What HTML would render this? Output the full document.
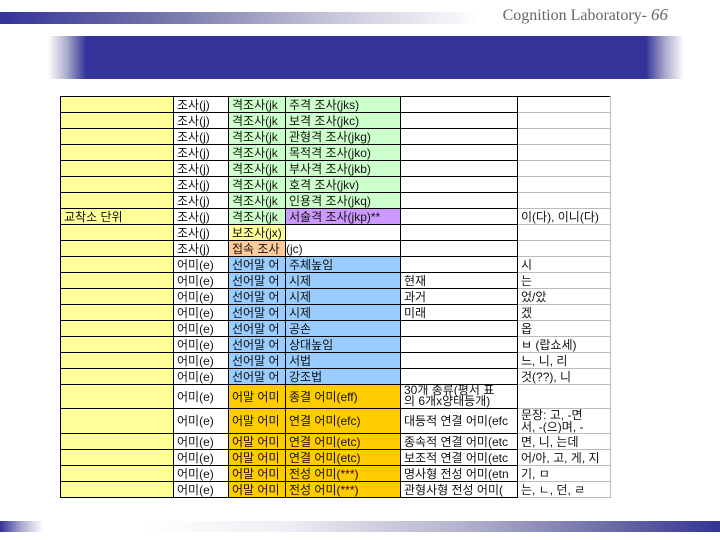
<!DOCTYPE html>
<html><head><meta charset="utf-8"><style>
*{margin:0;padding:0;box-sizing:border-box}
body{width:720px;height:540px;background:#fff;position:relative;overflow:hidden;font-family:"Liberation Sans","Noto Sans CJK KR","NanumGothic",sans-serif}
.topbar{position:absolute;left:0;top:12px;width:480px;height:12px;background:linear-gradient(90deg,#333399 0%,#7777aa 35%,#c8c8dc 70%,#fff 100%)}
.hdr{position:absolute;right:52px;top:5px;font-family:"Liberation Serif",serif;font-size:16px;color:#666}
.hdr i{font-size:17px}
.title{position:absolute;left:48px;top:36px;width:636px;height:43px;background:linear-gradient(90deg,#fff 0%,#aaaacc 3%,#333399 6%,#333399 94%,#aaaacc 97%,#fff 100%)}
.botbar{position:absolute;left:0;top:521px;width:720px;height:11px;background:linear-gradient(90deg,#333399 0%,#aaaad0 3%,#fff 6%,#fff 20%,#eeeef4 40%,#b0b0cc 65%,#6a6aa8 85%,#333399 100%)}
table{position:absolute;left:60px;top:96px;width:550px;border-collapse:collapse;table-layout:fixed;font-size:12px}
td{border:1px solid #000;height:16px;padding:0 0 0 3px;white-space:nowrap;overflow:hidden;line-height:14px;color:#111}
td.c6{border-color:#bbb;border-left:1px solid #000}
tr:first-child td.c6{border-top:1px solid #000}
.y{background:#ffff99}.g{background:#ccffcc}.p{background:#cc99ff}.o{background:#ffcc99}.b{background:#99ccff}.gd{background:#ffcc00}
tr.t td{height:24px}
</style></head><body>
<div class="topbar"></div>
<div class="hdr">Cognition Laboratory- <i>66</i></div>
<div class="title"></div>
<table>
<colgroup><col style="width:113px"><col style="width:55px"><col style="width:57px"><col style="width:115px"><col style="width:117px"><col style="width:93px"></colgroup>
<tr><td class="y"></td><td>조사(j)</td><td class="g">격조사(jk</td><td class="g">주격 조사(jks)</td><td></td><td class="c6"></td></tr>
<tr><td class="y"></td><td>조사(j)</td><td class="g">격조사(jk</td><td class="g">보격 조사(jkc)</td><td></td><td class="c6"></td></tr>
<tr><td class="y"></td><td>조사(j)</td><td class="g">격조사(jk</td><td class="g">관형격 조사(jkg)</td><td></td><td class="c6"></td></tr>
<tr><td class="y"></td><td>조사(j)</td><td class="g">격조사(jk</td><td class="g">목적격 조사(jko)</td><td></td><td class="c6"></td></tr>
<tr><td class="y"></td><td>조사(j)</td><td class="g">격조사(jk</td><td class="g">부사격 조사(jkb)</td><td></td><td class="c6"></td></tr>
<tr><td class="y"></td><td>조사(j)</td><td class="g">격조사(jk</td><td class="g">호격 조사(jkv)</td><td></td><td class="c6"></td></tr>
<tr><td class="y"></td><td>조사(j)</td><td class="g">격조사(jk</td><td class="g">인용격 조사(jkq)</td><td></td><td class="c6"></td></tr>
<tr><td class="y">교착소 단위</td><td>조사(j)</td><td class="g">격조사(jk</td><td class="p">서술격 조사(jkp)**</td><td></td><td class="c6">이(다), 이니(다)</td></tr>
<tr><td class="y"></td><td>조사(j)</td><td class="y">보조사(jx)</td><td style="border-left:none"></td><td></td><td class="c6"></td></tr>
<tr><td class="y"></td><td>조사(j)</td><td class="o">접속 조사</td><td style="border-left:none;padding-left:0">(jc)</td><td></td><td class="c6"></td></tr>
<tr><td class="y"></td><td>어미(e)</td><td class="b">선어말 어</td><td class="b">주체높임</td><td></td><td class="c6">시</td></tr>
<tr><td class="y"></td><td>어미(e)</td><td class="b">선어말 어</td><td class="b">시제</td><td>현재</td><td class="c6">는</td></tr>
<tr><td class="y"></td><td>어미(e)</td><td class="b">선어말 어</td><td class="b">시제</td><td>과거</td><td class="c6">었/았</td></tr>
<tr><td class="y"></td><td>어미(e)</td><td class="b">선어말 어</td><td class="b">시제</td><td>미래</td><td class="c6">겠</td></tr>
<tr><td class="y"></td><td>어미(e)</td><td class="b">선어말 어</td><td class="b">공손</td><td></td><td class="c6">옵</td></tr>
<tr><td class="y"></td><td>어미(e)</td><td class="b">선어말 어</td><td class="b">상대높임</td><td></td><td class="c6">ㅂ (랍쇼세)</td></tr>
<tr><td class="y"></td><td>어미(e)</td><td class="b">선어말 어</td><td class="b">서법</td><td></td><td class="c6">느, 니, 리</td></tr>
<tr><td class="y"></td><td>어미(e)</td><td class="b">선어말 어</td><td class="b">강조법</td><td></td><td class="c6">것(??), 니</td></tr>
<tr class="t"><td class="y"></td><td>어미(e)</td><td class="gd">어말 어미</td><td class="gd">종결 어미(eff)</td><td style="line-height:11px;vertical-align:top">30개 종류(평서 표<br>의 6개x양태등개)</td><td class="c6"></td></tr>
<tr class="t"><td class="y"></td><td>어미(e)</td><td class="gd">어말 어미</td><td class="gd">연결 어미(efc)</td><td>대등적 연결 어미(efc</td><td class="c6" style="line-height:12px">문장: 고, -면<br>서, -(으)며, -</td></tr>
<tr><td class="y"></td><td>어미(e)</td><td class="gd">어말 어미</td><td class="gd">연결 어미(etc)</td><td>종속적 연결 어미(etc</td><td class="c6">면, 니, 는데</td></tr>
<tr><td class="y"></td><td>어미(e)</td><td class="gd">어말 어미</td><td class="gd">연결 어미(etc)</td><td>보조적 연결 어미(etc</td><td class="c6">어/아, 고, 게, 지</td></tr>
<tr><td class="y"></td><td>어미(e)</td><td class="gd">어말 어미</td><td class="gd">전성 어미(***)</td><td>명사형 전성 어미(etn</td><td class="c6">기, ㅁ</td></tr>
<tr><td class="y"></td><td>어미(e)</td><td class="gd">어말 어미</td><td class="gd">전성 어미(***)</td><td>관형사형 전성 어미(</td><td class="c6">는, ㄴ, 던, ㄹ</td></tr>
</table>
<div class="botbar"></div>
</body></html>
